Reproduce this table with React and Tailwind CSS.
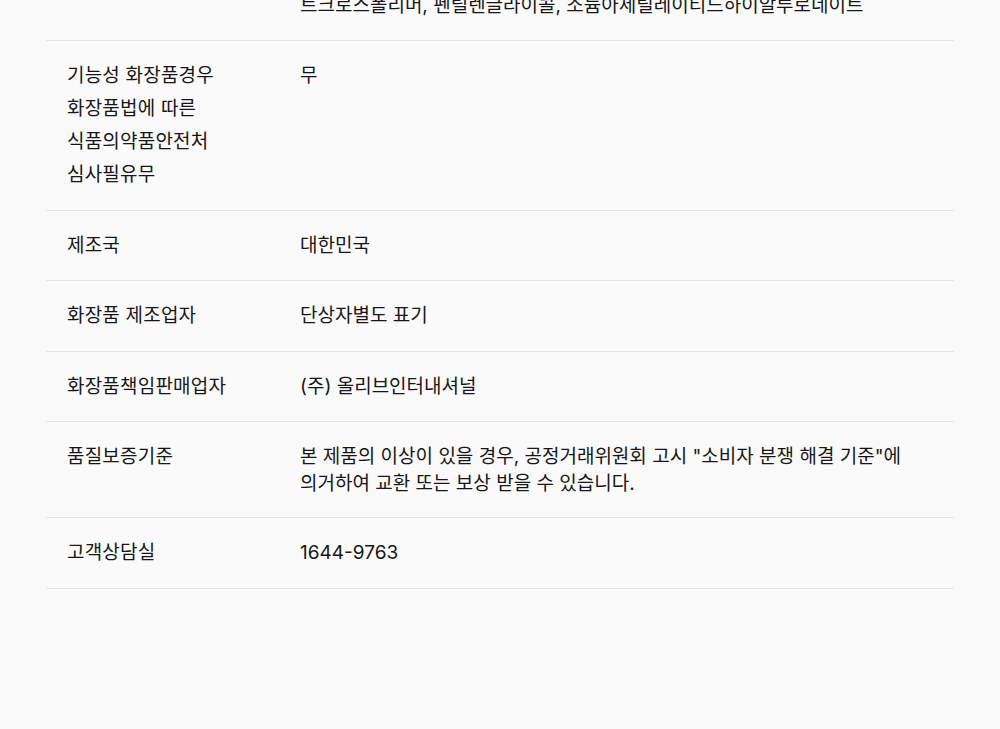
import React from 'react';

const rows = [
  {
    label: ['기능성 화장품경우', '화장품법에 따른', '식품의약품안전처', '심사필유무'],
    value: ['무'],
  },
  { label: ['제조국'], value: ['대한민국'] },
  { label: ['화장품 제조업자'], value: ['단상자별도 표기'] },
  { label: ['화장품책임판매업자'], value: ['(주) 올리브인터내셔널'] },
  {
    label: ['품질보증기준'],
    value: [
      '본 제품의 이상이 있을 경우, 공정거래위원회 고시 "소비자 분쟁 해결 기준"에',
      '의거하여 교환 또는 보상 받을 수 있습니다.',
    ],
  },
  { label: ['고객상담실'], value: ['1644-9763'] },
];

const font = { fontFamily: 'Inter, "Noto Sans CJK KR", "Noto Sans", sans-serif' };

export default function App() {
  return (
    <div className="min-h-[729px] bg-[#fafafa] overflow-hidden" style={font}>
      <div className="mx-[46px] text-[19px] text-[#161616]">
        {/* tail of the previous row (ingredients), scrolled past the top */}
        <div className="flex border-b border-[#e3e3e3]">
          <div className="w-[254px] shrink-0" />
          <div className="pb-[21px] leading-[27px] -mt-[8px]">
            트크로스폴리머, 펜틸렌글라이콜, 소듐아세틸레이티드하이알루로네이트
          </div>
        </div>

        {rows.map((row, i) => (
          <div key={i} className="flex border-b border-[#e3e3e3]">
            <div className="w-[254px] shrink-0 pl-[21px] pt-[18px] pb-[18.5px] leading-[33px] tracking-[0.2px]">
              {row.label.map((l, j) => (
                <div key={j}>{l}</div>
              ))}
            </div>
            <div className="flex-1 pt-[21px] pb-[20px] leading-[27px] pr-[20px]">
              {row.value.map((v, j) => (
                <div key={j}>{v}</div>
              ))}
            </div>
          </div>
        ))}
      </div>
    </div>
  );
}
